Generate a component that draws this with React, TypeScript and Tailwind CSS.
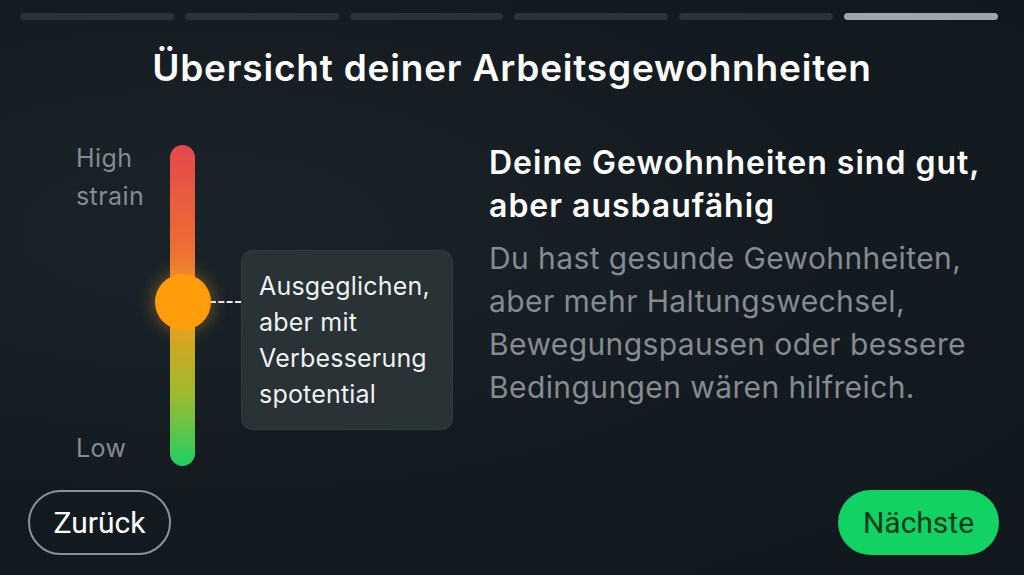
import React from "react";

const steps = [false, false, false, false, false, true];

export default function App() {
  return (
    <div className="flex h-[575px] w-[1024px] flex-col overflow-hidden bg-[radial-gradient(ellipse_at_20%_40%,#1a2428_0%,#141b20_55%,#11181d_100%)] font-['Inter',sans-serif] text-white">
      {/* progress */}
      <div className="flex gap-[11px] pl-[20px] pr-[26px] pt-[13px]">
        {steps.map((active, i) => (
          <div
            key={i}
            className={
              active
                ? "h-[7px] flex-1 rounded-full bg-[#a1a4a8]"
                : "h-[7px] flex-1 rounded-full bg-[#2c3238]"
            }
          />
        ))}
      </div>

      <h1 className="mt-[28px] text-center text-[37px] font-semibold leading-[40px] tracking-[0.8px]">
        Übersicht deiner Arbeitsgewohnheiten
      </h1>

      <div className="mt-[57px] flex flex-1 items-start">
        {/* scale */}
        <div className="ml-[76px] flex items-start">
          <div className="-mt-[6px] flex h-[328px] w-[94px] flex-col justify-between text-[25px] leading-[38px] tracking-[0.4px] text-[#858b90]">
            <div>
              High
              <br />
              strain
            </div>
            <div>Low</div>
          </div>
          <div className="relative h-[321px] w-[25px] rounded-full bg-[linear-gradient(to_bottom,#e5484d_0%,#ec6b34_30%,#f08a2a_45%,#d6a51f_60%,#9cbb2f_78%,#1fcf63_100%)]">
            <div className="absolute left-1/2 top-[129px] h-[56px] w-[56px] -translate-x-1/2 rounded-full bg-[#ff9d0a] shadow-[0_0_18px_rgba(255,170,60,0.45)]" />
          </div>
          <div className="ml-[15px] mt-[156px] w-[31px] border-t-2 border-dashed border-white/90" />
          <div className="mt-[105px] w-[212px] rounded-[12px] border border-white/5 bg-[#293235] px-[17px] py-[17px] text-[25px] leading-[36px] tracking-[0.2px] text-white/95">
            <div>Ausgeglichen,</div>
            <div>aber mit</div>
            <div>Verbesserung</div>
            <div>spotential</div>
          </div>
        </div>

        {/* text */}
        <div className="ml-[36px] -mt-[4px] flex-1 pr-[10px]">
          <h2 className="text-[32px] font-semibold leading-[43px] tracking-[1px] text-white">
            Deine Gewohnheiten sind gut,
            <br />
            aber ausbaufähig
          </h2>
          <p className="mt-[10px] text-[30px] leading-[43px] tracking-[0.4px] text-[#858b90]">
            Du hast gesunde Gewohnheiten,
            <br />
            aber mehr Haltungswechsel,
            <br />
            Bewegungspausen oder bessere
            <br />
            Bedingungen wären hilfreich.
          </p>
        </div>
      </div>

      {/* footer */}
      <div className="flex items-center justify-between pb-[20px] pl-[28px] pr-[25px] font-['Roboto',sans-serif]">
        <button className="h-[65px] w-[143px] rounded-full border-2 border-[#8d9296] text-[30px] text-white">
          Zurück
        </button>
        <button className="h-[65px] w-[161px] rounded-full bg-[#12d264] text-[30px] text-[#0b3a1d]">
          Nächste
        </button>
      </div>
    </div>
  );
}
